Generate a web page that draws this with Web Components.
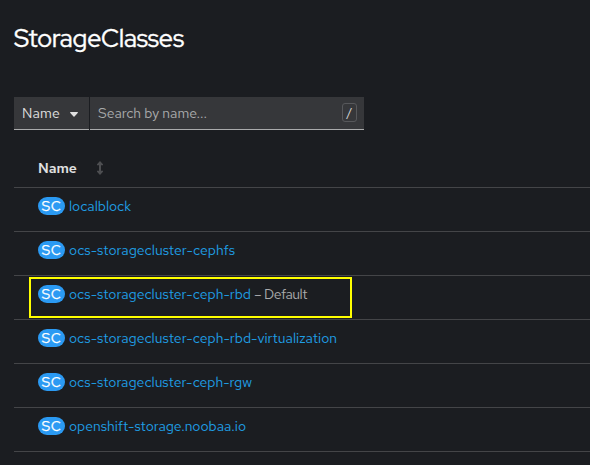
<!DOCTYPE html>
<html lang="en">
<head>
<meta charset="utf-8">
<title>StorageClasses</title>
<style>
html,body{margin:0;background:#1b1d21}
body{width:590px;height:465px;overflow:hidden;font:14px/21px "Red Hat Text","Noto Sans",sans-serif;color:#e0e0e0}
</style>
</head>
<body>
<storage-page></storage-page>
<script>
// Text run whose tracking is adjusted so that it takes up `w` pixels.
customElements.define('fit-text', class extends HTMLElement {
  connectedCallback() {
    const root = this.attachShadow({mode: 'open'});
    root.innerHTML = `<style>:host{display:inline-block;white-space:pre;width:${this.getAttribute('w')}px}span{display:inline-block}</style><span></span>`;
    const s = root.querySelector('span');
    s.textContent = this.getAttribute('text');
    const n = s.textContent.length;
    const natural = s.getBoundingClientRect().width;
    s.style.letterSpacing = ((+this.getAttribute('w') - natural) / n).toFixed(3) + 'px';
  }
});

customElements.define('kind-badge', class extends HTMLElement {
  connectedCallback() {
    this.attachShadow({mode: 'open'}).innerHTML = `
      <style>:host{display:flex;box-sizing:border-box;width:27px;height:18px;border-radius:9px;background:#2b9af3;color:#fff;padding-left:3.5px;line-height:18px;flex:none;-webkit-text-stroke:.25px #fff}</style>
      <fit-text w="20" text="SC"></fit-text>`;
  }
});

customElements.define('resource-row', class extends HTMLElement {
  connectedCallback() {
    const note = this.getAttribute('note');
    this.attachShadow({mode: 'open'}).innerHTML = `
      <style>
        :host{display:flex;box-sizing:border-box;height:44px;padding:9px 0 0 24px;border-bottom:1px solid #444548;position:relative}
        .link{color:#1f9fe6;margin-left:4px;height:21px;line-height:18px}
        .note{color:#aaabac;margin-left:3px;line-height:18px}
        .mark{position:absolute;left:15px;top:1px;width:323px;height:41px;box-sizing:border-box;border:2px solid #ff0}
      </style>
      <kind-badge></kind-badge>
      <fit-text class="link" w="${this.getAttribute('w')}" text="${this.getAttribute('name')}"></fit-text>
      ${note ? `<fit-text class="note" w="53" text="${note}"></fit-text><div class="mark"></div>` : ''}`;
  }
});

customElements.define('filter-bar', class extends HTMLElement {
  connectedCallback() {
    this.attachShadow({mode: 'open'}).innerHTML = `
      <style>
        :host{display:flex;gap:1px;height:33px}
        div{box-sizing:border-box;height:33px;background:#36373a;border-bottom:1px solid #aaabac;display:flex;align-items:center;padding-left:8px}
        .pick{width:75px}
        .pick svg{margin:3px 0 0 10px}
        .search{width:274px;color:#aaabac;justify-content:space-between;padding-right:7px}
        kbd{font:inherit;color:#e0e0e0;box-sizing:border-box;width:15px;height:19px;border:1px solid #57585b;border-radius:3px;font-size:12px;line-height:17px;text-align:center;margin-bottom:1px}
      </style>
      <div class="pick"><fit-text w="38" text="Name"></fit-text><svg width="8" height="5" viewBox="0 0 8 5"><path d="M.5 0h7q.7.3.2.9L4.5 4.6q-.5.5-1 0L.3.9Q-.2.3.5 0z" fill="#e0e0e0"/></svg></div>
      <div class="search"><fit-text w="109" text="Search by name..."></fit-text><kbd>/</kbd></div>`;
  }
});

customElements.define('table-head', class extends HTMLElement {
  connectedCallback() {
    this.attachShadow({mode: 'open'}).innerHTML = `
      <style>:host{display:flex;box-sizing:border-box;height:58px;border-bottom:1px solid #444548;padding:28px 0 0 24px;font-weight:600}
      svg{margin:3px 0 0 20px}</style>
      <fit-text w="39" text="Name"></fit-text>
      <svg width="6" height="14" viewBox="0 0 6 14"><path d="M3 0L6 3.2V4.2H4V9.8H6V10.8L3 14L0 10.8V9.8H2V4.2H0V3.2z" fill="#4d4e51"/></svg>`;
  }
});

customElements.define('storage-page', class extends HTMLElement {
  connectedCallback() {
    this.attachShadow({mode: 'open'}).innerHTML = `
      <style>
        :host{display:block;padding:23px 0 0 14px}
        h1{margin:0 0 43px;height:31px;font-family:"Red Hat Display","Red Hat Text","Noto Sans",sans-serif;font-weight:400;font-size:25px;line-height:31px;color:#fff;-webkit-text-stroke:.4px #fff}
      </style>
      <h1><fit-text w="170" text="StorageClasses"></fit-text></h1>
      <filter-bar></filter-bar>
      <table-head></table-head>
      <resource-row name="localblock" w="62"></resource-row>
      <resource-row name="ocs-storagecluster-cephfs" w="166"></resource-row>
      <resource-row name="ocs-storagecluster-ceph-rbd" w="182" note="– Default"></resource-row>
      <resource-row name="ocs-storagecluster-ceph-rbd-virtualization" w="268"></resource-row>
      <resource-row name="ocs-storagecluster-ceph-rgw" w="183"></resource-row>
      <resource-row name="openshift-storage.noobaa.io" w="177"></resource-row>`;
  }
});
</script>
</body>
</html>
